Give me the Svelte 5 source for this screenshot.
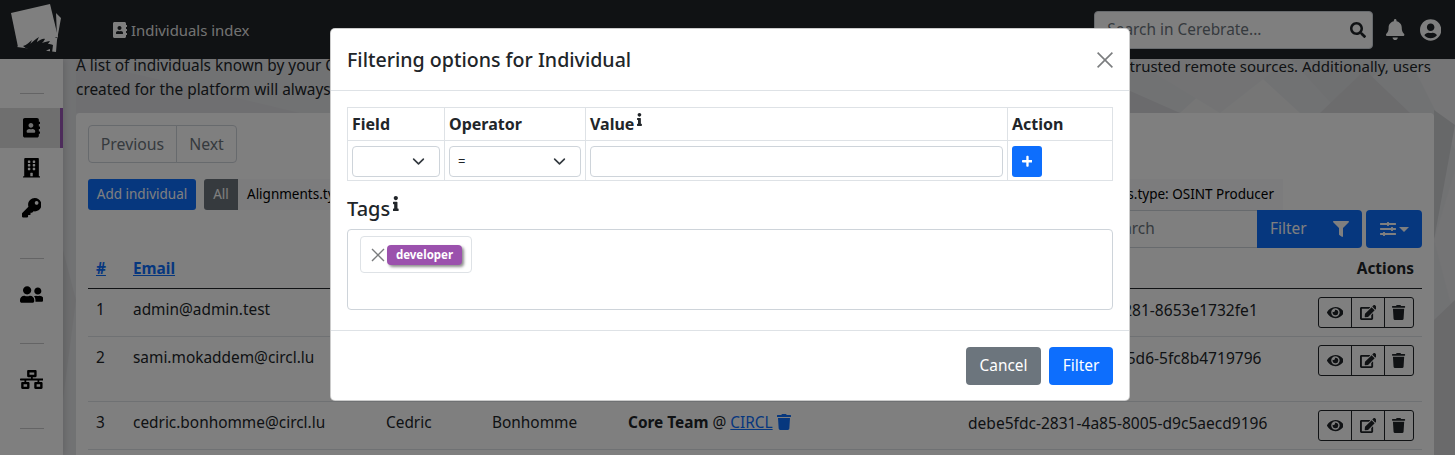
<script>
  const P = {
    book: [448, "M436 160c6.6 0 12-5.4 12-12v-40c0-6.6-5.4-12-12-12h-20V48c0-26.5-21.5-48-48-48H48C21.5 0 0 21.5 0 48v416c0 26.5 21.5 48 48 48h320c26.5 0 48-21.5 48-48v-48h20c6.6 0 12-5.4 12-12v-40c0-6.6-5.4-12-12-12h-20v-64h20c6.6 0 12-5.4 12-12v-40c0-6.6-5.4-12-12-12h-20v-64h20zm-228-32c35.3 0 64 28.7 64 64s-28.7 64-64 64-64-28.7-64-64 28.7-64 64-64zm112 236.8c0 10.6-10 19.2-22.4 19.2H118.4C106 384 96 375.4 96 364.8v-19.2c0-31.8 30.1-57.6 67.2-57.6h5c12.3 5.1 25.7 8 39.8 8s27.6-2.9 39.8-8h5c37.1 0 67.2 25.8 67.2 57.6v19.2z"],
    building: [448, "M436 480h-20V24c0-13.3-10.7-24-24-24H56C42.7 0 32 10.7 32 24v456H12c-6.6 0-12 5.4-12 12v20h448v-20c0-6.6-5.4-12-12-12zM128 76c0-6.6 5.4-12 12-12h40c6.6 0 12 5.4 12 12v40c0 6.6-5.4 12-12 12h-40c-6.6 0-12-5.4-12-12V76zm0 96c0-6.6 5.4-12 12-12h40c6.6 0 12 5.4 12 12v40c0 6.6-5.4 12-12 12h-40c-6.6 0-12-5.4-12-12v-40zm52 148h-40c-6.6 0-12-5.4-12-12v-40c0-6.6 5.4-12 12-12h40c6.6 0 12 5.4 12 12v40c0 6.6-5.4 12-12 12zm76 160h-64v-84c0-6.6 5.4-12 12-12h40c6.6 0 12 5.4 12 12v84zm64-172c0 6.6-5.4 12-12 12h-40c-6.6 0-12-5.4-12-12v-40c0-6.6 5.4-12 12-12h40c6.6 0 12 5.4 12 12v40zm0-96c0 6.6-5.4 12-12 12h-40c-6.6 0-12-5.4-12-12v-40c0-6.6 5.4-12 12-12h40c6.6 0 12 5.4 12 12v40zm0-96c0 6.6-5.4 12-12 12h-40c-6.6 0-12-5.4-12-12V76c0-6.6 5.4-12 12-12h40c6.6 0 12 5.4 12 12v40z"],
    key: [512, "M512 176.001C512 273.203 433.202 352 336 352c-11.22 0-22.19-1.062-32.827-3.069l-24.012 27.014A23.999 23.999 0 0 1 261.223 384H224v40c0 13.255-10.745 24-24 24h-40v40c0 13.255-10.745 24-24 24H24c-13.255 0-24-10.745-24-24v-78.059c0-6.365 2.529-12.47 7.029-16.971l161.802-161.802C163.108 213.814 160 195.271 160 176 160 78.798 238.797.001 335.999 0 433.488-.001 512 78.511 512 176.001zM336 128c0 26.51 21.49 48 48 48s48-21.49 48-48-21.49-48-48-48-48 21.49-48 48z"],
    friends: [640, "M192 256c61.9 0 112-50.1 112-112S253.9 32 192 32 80 82.1 80 144s50.1 112 112 112zm76.8 32h-8.3c-20.8 10-43.9 16-68.5 16s-47.6-6-68.5-16h-8.3C51.6 288 0 339.6 0 403.2V432c0 26.5 21.5 48 48 48h288c26.5 0 48-21.5 48-48v-28.8c0-63.6-51.6-115.2-115.2-115.2zM480 256c53 0 96-43 96-96s-43-96-96-96-96 43-96 96 43 96 96 96zm48 32h-3.8c-13.9 4.8-28.6 8-44.2 8s-30.3-3.2-44.2-8H432c-20.4 0-39.2 5.9-55.7 15.4 24.4 26.3 39.7 61.2 39.7 99.8v38.4c0 2.2-.5 4.3-.6 6.4H592c26.5 0 48-21.5 48-48 0-61.9-50.1-112-112-112z"],
    network: [640, "M640 264v-16c0-8.84-7.16-16-16-16H344v-40h72c17.67 0 32-14.33 32-32V32c0-17.67-14.33-32-32-32H224c-17.67 0-32 14.33-32 32v128c0 17.67 14.33 32 32 32h72v40H16c-8.84 0-16 7.16-16 16v16c0 8.84 7.16 16 16 16h104v40H64c-17.67 0-32 14.33-32 32v128c0 17.67 14.33 32 32 32h160c17.67 0 32-14.33 32-32V352c0-17.67-14.33-32-32-32h-56v-40h304v40h-56c-17.67 0-32 14.33-32 32v128c0 17.67 14.33 32 32 32h160c17.67 0 32-14.33 32-32V352c0-17.67-14.33-32-32-32h-56v-40h104c8.84 0 16-7.16 16-16zM256 128V64h128v64H256zm-64 320H96v-64h96v64zm352 0h-96v-64h96v64z"],
    search: [512, "M505 442.7L405.3 343c-4.5-4.5-10.6-7-17-7H372c27.6-35.3 44-79.7 44-128C416 93.1 322.9 0 208 0S0 93.1 0 208s93.1 208 208 208c48.3 0 92.7-16.4 128-44v16.3c0 6.4 2.5 12.5 7 17l99.7 99.7c9.4 9.4 24.6 9.4 33.9 0l28.3-28.3c9.4-9.4 9.4-24.6.1-34zM208 336c-70.7 0-128-57.2-128-128 0-70.7 57.2-128 128-128 70.7 0 128 57.2 128 128 0 70.7-57.2 128-128 128z"],
    bell: [448, "M224 512c35.32 0 63.97-28.65 63.97-64H160.03c0 35.35 28.65 64 63.97 64zm215.39-149.71c-19.32-20.76-55.47-51.99-55.47-154.29 0-77.7-54.48-139.9-127.94-155.16V32c0-17.67-14.32-32-31.98-32s-31.98 14.33-31.98 32v20.84C118.56 68.1 64.08 130.3 64.08 208c0 102.3-36.15 133.53-55.47 154.29-6 6.45-8.66 14.16-8.61 21.71.11 16.4 12.98 32 32.1 32h383.8c19.12 0 32-15.6 32.1-32 .05-7.55-2.61-15.27-8.61-21.71z"],
    user: [496, "M248 8C111 8 0 119 0 256s111 248 248 248 248-111 248-248S385 8 248 8zm0 96c48.6 0 88 39.4 88 88s-39.4 88-88 88-88-39.4-88-88 39.4-88 88-88zm0 344c-58.7 0-111.3-26.6-146.5-68.2 18.8-35.4 55.6-59.8 98.5-59.8 2.4 0 4.8.4 7.1 1.1 13 4.2 26.6 6.9 40.9 6.9 14.3 0 28-2.7 40.9-6.9 2.3-.7 4.7-1.1 7.1-1.1 42.9 0 79.7 24.4 98.5 59.8C359.3 421.4 306.7 448 248 448z"],
    filter: [512, "M487.976 0H24.028C2.71 0-8.047 25.866 7.058 40.971L192 225.941V432c0 7.831 3.821 15.17 10.237 19.662l80 55.98C298.02 518.69 320 507.493 320 487.98V225.941l184.947-184.97C520.021 25.896 509.338 0 487.976 0z"],
    sliders: [512, "M496 384H160v-16c0-8.8-7.2-16-16-16h-32c-8.8 0-16 7.2-16 16v16H16c-8.8 0-16 7.2-16 16v32c0 8.8 7.2 16 16 16h80v16c0 8.8 7.2 16 16 16h32c8.8 0 16-7.2 16-16v-16h336c8.8 0 16-7.2 16-16v-32c0-8.8-7.2-16-16-16zm0-160h-80v-16c0-8.8-7.2-16-16-16h-32c-8.8 0-16 7.2-16 16v16H16c-8.8 0-16 7.2-16 16v32c0 8.8 7.2 16 16 16h336v16c0 8.8 7.2 16 16 16h32c8.8 0 16-7.2 16-16v-16h80c8.8 0 16-7.2 16-16v-32c0-8.8-7.2-16-16-16zm0-160H288V48c0-8.8-7.2-16-16-16h-32c-8.8 0-16 7.2-16 16v16H16C7.2 64 0 71.2 0 80v32c0 8.8 7.2 16 16 16h208v16c0 8.8 7.2 16 16 16h32c8.8 0 16-7.2 16-16v-16h208c8.8 0 16-7.2 16-16V80c0-8.8-7.2-16-16-16z"],
    eye: [576, "M572.52 241.4C518.29 135.59 410.93 64 288 64S57.68 135.64 3.48 241.41a32.35 32.35 0 0 0 0 29.19C57.71 376.41 165.07 448 288 448s230.32-71.64 284.52-177.41a32.35 32.35 0 0 0 0-29.19zM288 400a144 144 0 1 1 144-144 143.93 143.93 0 0 1-144 144zm0-240a95.31 95.31 0 0 0-25.31 3.79 47.85 47.85 0 0 1-66.9 66.9A95.78 95.78 0 1 0 288 160z"],
    edit: [576, "M402.6 83.2l90.2 90.2c3.8 3.8 3.8 10 0 13.8L274.4 405.6l-92.8 10.3c-12.4 1.4-22.9-9.1-21.5-21.5l10.3-92.8L388.8 83.2c3.8-3.8 10-3.8 13.8 0zm162-22.9l-48.8-48.8c-15.2-15.2-39.9-15.2-55.2 0l-35.4 35.4c-3.8 3.8-3.8 10 0 13.8l90.2 90.2c3.8 3.8 10 3.8 13.8 0l35.4-35.4c15.2-15.3 15.2-40 0-55.2zM384 346.2V448H64V128h229.8c3.2 0 6.2-1.3 8.5-3.5l40-40c7.6-7.6 2.2-20.5-8.5-20.5H48C21.5 64 0 85.5 0 112v352c0 26.5 21.5 48 48 48h352c26.5 0 48-21.5 48-48V306.2c0-10.7-12.9-16-20.5-8.5l-40 40c-2.2 2.3-3.5 5.3-3.5 8.5z"],
    trash: [448, "M432 32H312l-9.4-18.7A24 24 0 0 0 281.1 0H166.8a23.72 23.72 0 0 0-21.4 13.3L136 32H16A16 16 0 0 0 0 48v32a16 16 0 0 0 16 16h416a16 16 0 0 0 16-16V48a16 16 0 0 0-16-16zM53.2 467a48 48 0 0 0 47.9 45h245.8a48 48 0 0 0 47.9-45L416 128H32z"],
    plus: [448, "M416 208H272V64c0-17.67-14.33-32-32-32h-32c-17.67 0-32 14.33-32 32v144H32c-17.67 0-32 14.33-32 32v32c0 17.67 14.33 32 32 32h144v144c0 17.67 14.33 32 32 32h32c17.67 0 32-14.33 32-32V304h144c17.67 0 32-14.33 32-32v-32c0-17.67-14.33-32-32-32z"],
    info: [192, "M20 424.229h20V279.771H20c-11.046 0-20-8.954-20-20V212c0-11.046 8.954-20 20-20h112c11.046 0 20 8.954 20 20v212.229h20c11.046 0 20 8.954 20 20V492c0 11.046-8.954 20-20 20H20c-11.046 0-20-8.954-20-20v-47.771c0-11.046 8.954-20 20-20zM96 0C56.235 0 24 32.235 24 72s32.235 72 72 72 72-32.235 72-72S135.764 0 96 0z"]
  };

  const rows = [
    { id: 1, email: "admin@admin.test", first: "admin", last: "admin", org: "", uuid: "4e6a1c2d-7b0f-4f35-f281-8653e1732fe1", tall: false },
    { id: 2, email: "sami.mokaddem@circl.lu", first: "Sami", last: "Mokaddem", org: "", uuid: "0b1f3c77-92ae-4d10-f5d6-5fc8b4719796", tall: true },
    { id: 3, email: "cedric.bonhomme@circl.lu", first: "Cedric", last: "Bonhomme", org: "Core Team", uuid: "debe5fdc-2831-4a85-8005-d9c5aecd9196", tall: false }
  ];

  const tris = [
    ["0,0 300,0 180,60", "#dcdde0"], ["300,0 560,60 110,60", "#e4e5e8"],
    ["700,0 1000,60 470,60", "#dfe0e3"], ["1060,60 1180,113 940,113", "#d6d7da"],
    ["1240,58 1300,113 1180,113", "#eceded"], ["1130,58 1290,58 1220,113", "#e6e7e9"],
    ["1290,58 1390,58 1340,113", "#dfe0e2"], ["1320,113 1365,70 1410,113", "#d8d9db"],
    ["1410,60 1455,60 1455,150", "#eaeaec"], ["1434,110 1455,125 1434,240", "#cfd0d3"],
    ["1434,240 1455,170 1455,320", "#e8e8ea"], ["1434,320 1455,300 1455,455 1434,455", "#d4d5d7"],
    ["76,60 300,113 76,113", "#dedfe2"], ["63,250 76,300 63,400", "#dadbdd"]
  ];
</script>

{#snippet ic(name, cls = "")}
  <svg class="ic {cls}" viewBox="0 0 {P[name][0]} 512" aria-hidden="true"><path d={P[name][1]} /></svg>
{/snippet}

<div class="page">
  <svg class="pattern" viewBox="0 0 1455 455" aria-hidden="true">
    {#each tris as t}<polygon points={t[0]} fill={t[1]} />{/each}
  </svg>

  <header class="top">
    <svg class="logo" viewBox="0 0 62 59" aria-hidden="true">
      <polygon points="55,12 61,18 57,40 56,52 40,50 17,47" fill="#fff" />
      <path d="M50 11l6 1 1 26-2 0z" fill="#212529" />
      <polygon points="11,13 50,4 58,37 18,47" fill="#fff" />
      <path d="M23 46c4-1 6-4 9-6-1 2-1 3-2 4 3-2 5-5 9-7-1 2-2 4-2 5 3-2 6-4 8-3-1 2-2 3-3 4 3-1 6-2 8-2l-2 3c2 0 3 0 5 1l-1 8-2 0 0-4c-3 1-5 2-6 4-3 0-6-2-9-2-4-1-9-2-12-5z" fill="#212529" />
    </svg>
    <div class="crumb">{@render ic("book", "crumb-ic")}<span>Individuals index</span></div>
    <div class="top-right">
      <div class="search">
        <input placeholder="Search in Cerebrate..." />
        {@render ic("search", "search-ic")}
      </div>
      {@render ic("bell", "bell")}
      {@render ic("user", "avatar")}
    </div>
  </header>

  <div class="body">
    <nav class="side">
      <hr class="first" />
      <a class="item active">{@render ic("book", "side-book")}</a>
      <a class="item">{@render ic("building", "side-book")}</a>
      <a class="item">{@render ic("key", "side-key")}</a>
      <hr class="g1" />
      <a class="item solo">{@render ic("friends", "side-wide")}</a>
      <hr />
      <a class="item solo">{@render ic("network", "side-wide")}</a>
      <hr />
      <a class="item last">{@render ic("building", "side-book")}</a>
    </nav>

    <main class="main">
      <div class="desc">
        <p class="line split">
          <span>A list of individuals known by your Cerebrate instance. This list can get populated from</span>
          <span class="tail">trusted remote sources. Additionally, users</span>
        </p>
        <p class="line">created for the platform will always have an individual identity.</p>
      </div>
      <section class="card">
        <div class="pager"><button>Previous</button><button>Next</button></div>
        <div class="toolbar">
          <button class="add">Add individual</button>
          <div class="chips">
            <span class="all">All</span>
            <span class="chip">Alignments.type: Content Provider</span>
            <span class="grow"></span>
            <span class="chip">Alignments.type: OSINT Producer</span>
          </div>
        </div>
        <div class="filters">
          <input class="q" placeholder="Search" />
          <button class="fbtn"><span>Filter</span>{@render ic("filter", "funnel")}</button>
          <button class="sbtn">{@render ic("sliders", "slide")}<i class="caret"></i></button>
        </div>
        <table class="list">
          <colgroup><col class="c1" /><col class="c2" /><col class="c3" /><col class="c4" /><col class="c5" /><col class="c6" /><col /></colgroup>
          <thead>
            <tr><th><a>#</a></th><th><a>Email</a></th><th>First name</th><th>Last name</th><th>Alignments</th><th>UUID</th><th class="r">Actions</th></tr>
          </thead>
          <tbody>
            {#each rows as r}
              <tr class:tall={r.tall}>
                <td>{r.id}</td><td>{r.email}</td><td>{r.first}</td><td>{r.last}</td>
                <td>{#if r.org}<b>{r.org}</b> @ <a class="lnk">CIRCL</a> {@render ic("trash", "del")}{/if}</td>
                <td class="uuid">{r.uuid}</td>
                <td class="r act-cell">
                  <div class="acts">
                    <button>{@render ic("eye", "a-eye")}</button><button>{@render ic("edit", "a-edit")}</button><button>{@render ic("trash", "a-trash")}</button>
                  </div>
                </td>
              </tr>
            {/each}
          </tbody>
        </table>
      </section>
    </main>
  </div>

  <div class="backdrop"></div>

  <div class="modal" role="dialog">
    <div class="m-head">
      <h5>Filtering options for Individual</h5>
      <svg class="close" viewBox="0 0 16 16" aria-hidden="true"><path d="M.6.6l14.8 14.8M15.4.6L.6 15.4" /></svg>
    </div>
    <div class="m-body">
      <table class="opts">
        <colgroup><col class="o1" /><col class="o2" /><col class="o3" /><col /></colgroup>
        <thead>
          <tr><th>Field</th><th>Operator</th><th>Value<sup>{@render ic("info", "info")}</sup></th><th>Action</th></tr>
        </thead>
        <tbody>
          <tr>
            <td><select class="sel"><option></option></select></td>
            <td><select class="sel"><option>=</option></select></td>
            <td><input class="val" /></td>
            <td><button class="plus">{@render ic("plus", "plus-ic")}</button></td>
          </tr>
        </tbody>
      </table>
      <h5 class="tags-h">Tags<sup>{@render ic("info", "info-l")}</sup></h5>
      <div class="tagbox">
        <div class="tagchip">
          <svg class="x" viewBox="0 0 14 14" aria-hidden="true"><path d="M1 1l12 12M13 1L1 13" /></svg>
          <span class="badge">developer</span>
        </div>
      </div>
    </div>
    <div class="m-foot">
      <button class="cancel">Cancel</button>
      <button class="go">Filter</button>
    </div>
  </div>
</div>

<style>
  :global(body) { margin: 0; }
  * { box-sizing: border-box; }
  .page {
    position: relative; width: 1455px; height: 455px; overflow: hidden;
    background: #e3e4e7; color: #212529;
    font-family: "Noto Sans", sans-serif; font-size: 15.4px; line-height: 24px;
  }
  button, input, select { font: inherit; }
  .pattern { position: absolute; inset: 0; width: 1455px; height: 455px; }
  .ic { display: block; height: 1em; fill: currentColor; flex: none; }

  .top { position: relative; z-index: 2; height: 59px; background: #212529; display: flex; align-items: center; }
  .logo { width: 62px; height: 59px; flex: none; }
  .crumb { display: flex; align-items: center; margin-left: 51px; color: rgba(255,255,255,.9); gap: 4px; font-size: 14.9px; }
  .crumb-ic { font-size: 16px; color: #fff; }
  .top-right { margin-left: auto; display: flex; align-items: center; padding-right: 14px; }
  .search { position: relative; width: 279px; height: 38px; margin-right: 13px; }
  .search input { width: 100%; height: 100%; border: 1px solid #ced4da; border-radius: 4px; padding: 0 12px; background: #fff; }
  .search input::placeholder { color: #6c757d; opacity: 1; }
  .search-ic { position: absolute; right: 7px; top: 11px; font-size: 16px; color: #212529; }
  .bell { font-size: 21px; color: #fff; margin-right: 15px; }
  .avatar { font-size: 22px; color: #fff; }

  .body { position: relative; display: flex; height: 396px; }
  .side { width: 63px; flex: none; background: #fff; padding-top: 34px; display: flex; flex-direction: column; align-items: center; box-shadow: 2px 0 6px rgba(0,0,0,.12); }
  .side hr { width: 24px; height: 1px; border: 0; margin: 0; background: #c8c9cb; flex: none; }
  .side .first { margin-bottom: 14px; }
  .side .g1 { margin-top: 30px; }
  .item { width: 63px; height: 40px; flex: none; display: flex; align-items: center; justify-content: center; color: #000; }
  .item.solo { height: 84px; padding-bottom: 14px; }
  .item.last { margin-top: 16px; }
  .item.active { background: #dedede; border-right: 3px solid #9b59b6; padding-left: 3px; }
  .side-book { font-size: 19.5px; }
  .side-key { font-size: 19.5px; }
  .side-wide { font-size: 19px; }

  .main { flex: 1; min-width: 0; padding: 0 21px 0 13px; margin-top: -5px; position: relative; }
  .desc { margin: 0 3px 11px 0; }
  .line { display: block; white-space: nowrap; margin: 0; }
  .split { display: flex; justify-content: space-between; }
  .tail { font-size: 15px; }
  .card { background: #fff; border-radius: 4px; padding: 12px; height: 400px; }
  .pager { display: flex; height: 38px; font-size: 15.8px; }
  .pager button { background: none; border: 1px solid #ced4da; color: #6c757d; padding: 0; }
  .pager button:first-child { width: 89px; border-radius: 4px 0 0 4px; }
  .pager button:last-child { width: 61px; margin-left: -1px; border-radius: 0 4px 4px 0; }
  .toolbar { display: flex; gap: 8px; margin-top: 16px; height: 31px; font-size: 13.5px; }
  .add { width: 108px; background: #0d6efd; color: #fff; border: 0; border-radius: 3px; padding: 0 0 2px; }
  .chips { width: 1079px; display: flex; align-items: center; height: 31px; }
  .all { width: 34px; height: 31px; background: #6c757d; color: #fff; display: flex; align-items: center; justify-content: center; border-radius: 3px 0 0 3px; padding-bottom: 2px; }
  .chip { background: #f8f9fa; color: #000; height: 31px; display: flex; align-items: center; padding: 0 9px 2px; white-space: nowrap; }
  .grow { flex: 1; height: 31px; background: #f8f9fa; }
  .filters { display: flex; justify-content: flex-end; height: 38px; }
  .q { width: 164px; border: 1px solid #ced4da; border-right: 0; padding: 0 12px; background: #fff; border-radius: 4px 0 0 4px; }
  .q::placeholder { color: #6c757d; opacity: 1; }
  .fbtn { width: 105px; background: #0d6efd; color: #fff; border: 0; border-radius: 0 4px 4px 0; display: flex; align-items: center; justify-content: space-between; padding: 0 13px; }
  .funnel { font-size: 16px; }
  .sbtn { width: 56px; margin-left: 4px; background: #0d6efd; color: #fff; border: 0; border-radius: 4px; display: flex; align-items: center; justify-content: center; gap: 3px; }
  .slide { font-size: 16px; }
  .caret { width: 0; height: 0; border: 5px solid transparent; border-top-color: #fff; border-bottom: 0; }

  .list { width: 1334px; table-layout: fixed; border-collapse: collapse; }
  .c1 { width: 37px; } .c2 { width: 253px; } .c3 { width: 106px; } .c4 { width: 136px; } .c5 { width: 340px; } .c6 { width: 350px; }
  .list th { text-align: left; padding: 9px 8px 7px; font-weight: 700; border-bottom: 1px solid #212529; white-space: nowrap; height: 40px; }
  .list th a { color: #0d6efd; text-decoration: underline; }
  .list td { padding: 9px 8px 7px; border-bottom: 1px solid #dee2e6; vertical-align: top; white-space: nowrap; height: 48px; }
  .list td.act-cell { padding: 8px; }
  .list tr.tall td { height: 65px; }
  .list .r { text-align: right; }
  .list td.uuid { font-size: 15.55px; }
  .lnk { color: #0d6efd; text-decoration: underline; }
  .del { display: inline-block; font-size: 16px; color: #0d6efd; vertical-align: -2px; }
  .acts { display: inline-flex; height: 31px; border: 1px solid #212529; border-radius: 3px; vertical-align: top; }
  .acts button { width: 33px; background: none; border: 0; border-right: 1px solid #212529; padding: 0; display: flex; align-items: center; justify-content: center; color: #212529; }
  .acts button:last-child { width: 28px; border-right: 0; }
  .a-eye, .a-edit, .a-trash { font-size: 15px; }

  .backdrop { position: absolute; inset: 0; z-index: 3; background: rgba(0,0,0,.5); }

  .modal { position: absolute; z-index: 4; left: 330px; top: 28px; width: 800px; height: 373px; background: #fff; border: 1px solid rgba(0,0,0,.2); border-radius: 5px; display: flex; flex-direction: column; }
  .m-head { height: 62px; flex: none; display: flex; align-items: center; justify-content: space-between; padding: 0 16px; border-bottom: 1px solid #dee2e6; }
  h5 { margin: 0; font-weight: 500; font-size: 19.6px; line-height: 24px; }
  .close { width: 16px; height: 16px; fill: none; stroke: #7b7d7f; stroke-width: 1.6; }
  .m-body { flex: 1; padding: 16px 16px 0; }
  .opts { width: 766px; table-layout: fixed; border-collapse: collapse; }
  .o1 { width: 97px; } .o2 { width: 141px; } .o3 { width: 422px; }
  .opts th, .opts td { border: 1px solid #dee2e6; text-align: left; padding: 4px; }
  .opts th { height: 33px; font-weight: 700; font-size: 16px; }
  .opts td { height: 40px; padding: 4px 4px 3px; }
  sup { display: inline-block; vertical-align: top; line-height: 0; }
  .info { font-size: 13px; margin: 1px 0 0 3px; }
  .info-l { font-size: 15px; margin: -1px 0 0 3px; }
  .sel { display: block; width: 100%; height: 31px; appearance: none; border: 1px solid #ced4da; border-radius: 4px; background: #fff url("data:image/svg+xml,%3csvg xmlns='http://www.w3.org/2000/svg' viewBox='0 0 16 16'%3e%3cpath fill='none' stroke='%23343a40' stroke-linecap='round' stroke-linejoin='round' stroke-width='2' d='M2 5l6 6 6-6'/%3e%3c/svg%3e") no-repeat right 14px center / 13px 13px; padding: 0 8px; font-size: 13px; color: #212529; }
  .val { display: block; width: 100%; height: 31px; border: 1px solid #ced4da; border-radius: 4px; background: #fff; }
  .plus { display: flex; width: 30px; height: 31px; background: #0d6efd; border: 0; border-radius: 3px; align-items: center; justify-content: center; color: #fff; padding: 0; }
  .plus-ic { font-size: 12.5px; }
  .tags-h { margin-top: 16px; font-size: 20px; }
  .tagbox { margin-top: 8px; height: 81px; border: 1px solid #ced4da; border-radius: 4px; padding: 6px 12px; }
  .tagchip { display: inline-flex; align-items: center; width: 112px; height: 37px; border: 1px solid #dee2e6; border-radius: 4px; padding-left: 10px; gap: 1px; }
  .x { width: 14px; height: 14px; fill: none; stroke: #7a7c7e; stroke-width: 1.4; flex: none; }
  .badge { width: 75px; height: 20px; margin-left: 1px; background: #9b51ad; color: #fff; border-radius: 4px; font-size: 11.5px; font-weight: 700; display: flex; align-items: center; justify-content: center; box-shadow: 2px 2px 3px rgba(0,0,0,.45); line-height: 1; }
  .m-foot { height: 70px; flex: none; border-top: 1px solid #dee2e6; display: flex; justify-content: flex-end; align-items: center; gap: 8px; padding: 0 16px; }
  .m-foot button { height: 38px; border: 0; border-radius: 4px; color: #fff; padding: 0; }
  .cancel { width: 75px; background: #6c757d; }
  .go { width: 64px; background: #0d6efd; }
</style>
